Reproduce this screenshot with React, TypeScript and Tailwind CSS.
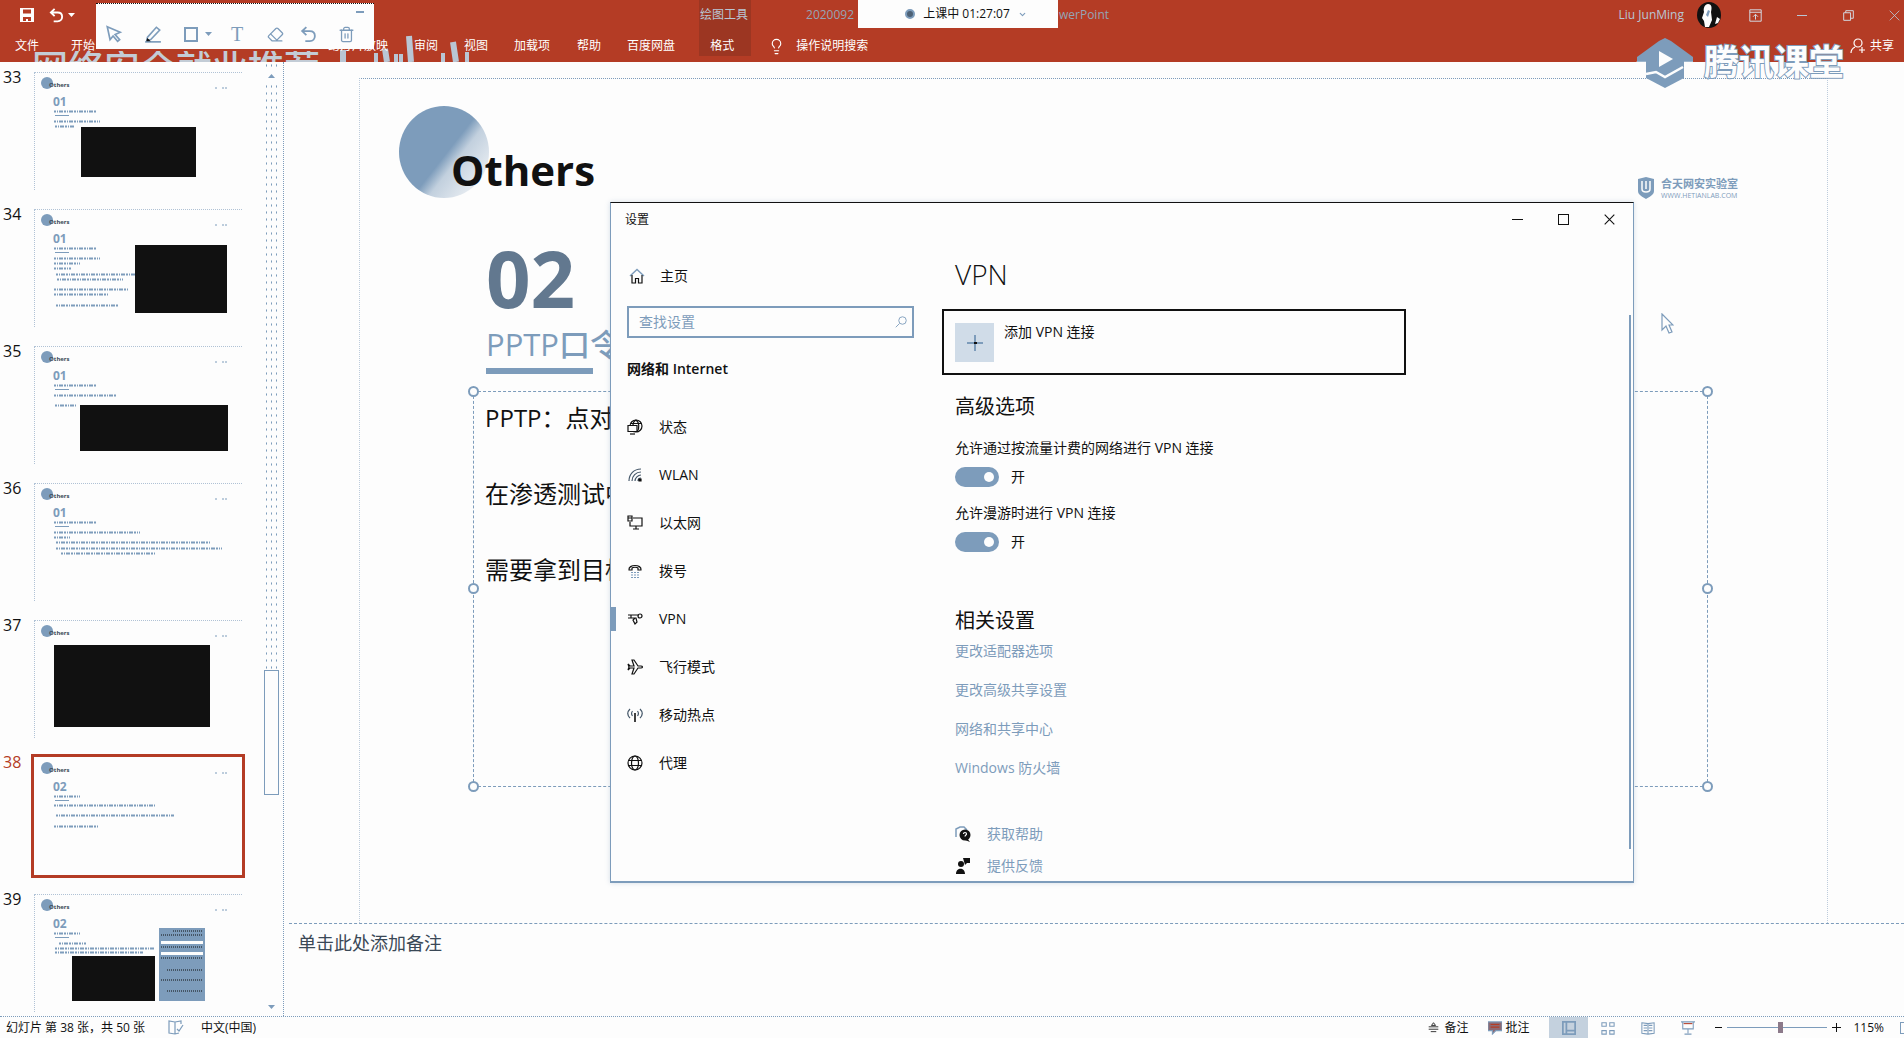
import React from "react";
import { ChevronDown, Lightbulb, Eraser, Trash2 } from "lucide-react";

const BLUE = "#7d9cbb";
const INK = "#111111";

type IconProps = { children: React.ReactNode; size?: number; color?: string; box?: string };

function Icon({ children, size = 16, color = "currentColor", box = "0 0 16 16" }: IconProps) {
  return (
    <svg
      width={size}
      height={size}
      viewBox={box}
      fill="none"
      stroke={color}
      strokeWidth={1.2}
      aria-hidden="true"
      className="shrink-0"
    >
      {children}
    </svg>
  );
}

function UndoGlyph({ size = 16, weight = 2 }: { size?: number; weight?: number }) {
  return (
    <Icon size={size}>
      <path d="M6 1L2 4.8l4 3.8M2 4.8h7.2c3 0 4.8 2 4.8 4.6s-1.8 4.8-4.8 4.8H5" strokeWidth={weight} />
    </Icon>
  );
}

function Caret() {
  return (
    <svg width="7" height="4" viewBox="0 0 7 4" fill="currentColor" aria-hidden="true" className="shrink-0">
      <path d="M0 0h7L3.500 4z" />
    </svg>
  );
}

function FloatingTools() {
  const button = "flex h-5 w-5 shrink-0 items-center justify-center";
  return (
    <div className="absolute top-[3px] left-24 z-20 flex h-[46px] w-[278px] items-end border-t border-dotted border-[#111] bg-[#fdfdfd] pb-[5px] pl-2 text-[#7d9cbb]">
      <button aria-label="最小化工具栏" className="absolute top-[7px] right-[10px] h-[2px] w-2 bg-[#7d9cbb]" />
      <button aria-label="选择" className={button}>
        <Icon size={18}>
          <path d="M2 1.500l11.500 5-4.500 2 4 4.500-1.800 1.500-4-4.700L4.500 13z" strokeWidth={1.500} />
        </Icon>
      </button>
      <button aria-label="画笔" className={`${button} ml-[19px]`}>
        <Icon size={18}>
          <path d="M3 11L11 2l3 2.500L6 13l-3.500.500z" strokeWidth={1.400} />
          <path d="M1 15h14" strokeWidth={1.500} />
          <path d="M2 14.500l1-3 3 3z" fill={INK} stroke="none" />
        </Icon>
      </button>
      <button aria-label="形状" className={`${button} ml-[18px]`}>
        <span className="h-[15px] w-[14px] border-2 border-[#7d9cbb]" />
      </button>
      <span className="mb-2 ml-[4px]"><Caret /></span>
      <button aria-label="文字" className={`${button} ml-[15px] font-["Liberation_Serif",serif] text-xl leading-5`}>
        T
      </button>
      <button aria-label="橡皮擦" className={`${button} ml-[18px]`}>
        <Eraser size={17} strokeWidth={1.800} />
      </button>
      <button aria-label="撤销" className={`${button} ml-[13px]`}>
        <UndoGlyph size={17} weight={1.700} />
      </button>
      <button aria-label="删除" className={`${button} ml-[18px]`}>
        <Trash2 size={17} strokeWidth={1.800} />
      </button>
    </div>
  );
}

function Header() {
  const tab = "shrink-0 whitespace-nowrap";
  return (
    <header className="relative h-[62px] shrink-0 text-xs text-white">
      <div className="h-full overflow-hidden bg-[#b43c25]">
        <div className="absolute top-0 left-[699px] h-14 w-[52px] bg-[#111]/15" />
        <div className="relative flex h-7 items-center pt-[2px]">
          <button aria-label="保存" className="ml-5">
            <svg width="14" height="14" viewBox="0 0 14 14" aria-hidden="true">
              <path d="M0 0h14v14H0z" fill="#fdfdfd" />
              <path d="M3 1.500h8v4H3zM3 9h8v4H8v-2H6v2H3z" fill="#b43c25" />
            </svg>
          </button>
          <button aria-label="撤销" className="ml-[15px]"><UndoGlyph size={15} weight={2} /></button>
          <span className="ml-[4px]"><Caret /></span>
          <span className="ml-[625px] shrink-0 text-[#b9c6d4]">绘图工具</span>
          <span className="ml-[58px] w-[303px] shrink-0 text-right whitespace-nowrap text-[#94a4b5]">
            <span className="float-left">2020092</span>werPoint
          </span>
          <span className="flex-1" />
          <span className="text-[#b9c6d4]">Liu JunMing</span>
          <svg className="ml-[13px]" width="24" height="26" viewBox="0 0 24 26" aria-hidden="true">
            <ellipse cx="12" cy="13" rx="12" ry="13" fill="#111" />
            <path d="M11 2c4 0 4 4 3 8l1 8-3 7H8l-1-6-2-3 2-6c-1-4 1-8 4-8zM20 15l3 2-2 4-3 1z" fill="#fdfdfd" />
            <path d="M11 8l2 1-2 6-2-2z" fill={BLUE} />
          </svg>
          <button aria-label="功能区显示选项" className="ml-[28px]">
            <Icon size={13} color="#d5dde6"><path d="M1 1h14v14H1zM1 4h14M8 13V7M5 9.500L8 6.500l3 3" /></Icon>
          </button>
          <button aria-label="最小化" className="ml-[35px] h-px w-[10px] bg-[#b9c6d4]" />
          <button aria-label="还原" className="ml-[36px]">
            <Icon size={11} color="#d5dde6"><path d="M1 4h10v11H1zM4 4V1h11v11h-4" strokeWidth={1.400} /></Icon>
          </button>
          <button aria-label="关闭" className="mr-1 ml-[35px]">
            <Icon size={11} color="#b9c6d4"><path d="M1 1l14 14M15 1L1 15" /></Icon>
          </button>
        </div>
        <nav className="relative z-10 flex h-9 items-center gap-[26px] pl-[15px]">
          <button className={`${tab} mr-[6px]`}>文件</button>
          <button className={tab}>开始</button>
          <button className={`${tab} ml-[207px]`}>幻灯片放映</button>
          <button className={tab}>审阅</button>
          <button className={tab}>视图</button>
          <button className={`${tab} mr-[1px]`}>加载项</button>
          <button className={tab}>帮助</button>
          <button className={tab}>百度网盘</button>
          <button className={`${tab} ml-[9px]`}>格式</button>
          <button className={`${tab} ml-[8px] flex items-center gap-[11px]`}>
            <Lightbulb size={17} strokeWidth={1.600} />
            操作说明搜索
          </button>
          <span className="flex-1" />
          <button className={`${tab} mr-[10px] flex items-center gap-[4px]`}>
            <Icon size={16}>
              <circle cx="8" cy="5" r="4" />
              <path d="M1 15c0-4 2-5 4-6M12 9v6M9 12h6" />
            </Icon>
            共享
          </button>
        </nav>
        <div className="pointer-events-none absolute right-0 bottom-0 left-[32px] flex h-[11px] items-start overflow-hidden text-4xl leading-[33px] font-medium text-[#c3ccd6]">
          <span className="shrink-0 whitespace-nowrap">网络安全就业推荐</span>
        </div>
        <svg className="pointer-events-none absolute top-8 left-[330px]" width="150" height="30" viewBox="0 0 150 30" aria-hidden="true">
          <g stroke="#b9c6d4">
            <path d="M13 18v12" strokeWidth="6" />
            <path d="M55 17l2 13M79 4l2 26M123 10l3 20" strokeWidth="6" />
            <path d="M46 21v9M66 22v8M71 22v8M113 21v9M137 20v10" strokeWidth="4" />
          </g>
        </svg>
      </div>
      <FloatingTools />
      <div className="absolute top-0 left-[858px] z-20 flex h-7 w-[200px] items-center justify-center gap-2 bg-[#fdfdfd] pl-4 text-xs text-[#111]">
        <span className="h-[10px] w-[10px] rounded-full border-2 border-[#7d9cbb] bg-[#4d6175]" />
        <span className="whitespace-nowrap">上课中 01:27:07</span>
        <ChevronDown size={9} strokeWidth={3} color={BLUE} />
      </div>
      <div className="pointer-events-none absolute top-[38px] right-[60px] z-10 flex items-start gap-[9px]">
        <svg width="60" height="50" viewBox="0 0 60 50" aria-hidden="true">
          <path d="M30 0l6 3 22 16v6H2v-6L24 3z" fill={BLUE} />
          <path d="M11 23h38v17L30 50 11 40z" fill={BLUE} />
          <path d="M24 13l14 8-14 8z" fill="#fdfdfd" />
          <path d="M11 36l10-2 9 5 18-10M1 25h10M49 25h9" stroke="#fdfdfd" strokeWidth="2.500" fill="none" />
        </svg>
        <span className="mt-[4px] text-[35px] leading-10 font-bold whitespace-nowrap text-[#fdfdfd] [-webkit-text-stroke:2px_#7d9cbb] [paint-order:stroke_fill]">
          腾讯课堂
        </span>
      </div>
    </header>
  );
}

type Stroke = [x: number, y: number, length: number];
type Block = { x: number; y: number; w: number; h: number };
type Thumb = { no: number; label?: string; strokes: Stroke[]; block?: Block; table?: boolean };

const THUMBS: Thumb[] = [
  { no: 33, label: "01", strokes: [[19, 38, 42], [19, 48, 46], [20, 53, 19]], block: { x: 46, y: 54, w: 115, h: 50 } },
  {
    no: 34,
    label: "01",
    strokes: [[19, 38, 42], [19, 48, 46], [19, 53, 26], [19, 58, 17], [21, 64, 80], [22, 69, 66], [19, 79, 74], [19, 84, 54], [21, 95, 62]],
    block: { x: 100, y: 35, w: 92, h: 68 },
  },
  { no: 35, label: "01", strokes: [[19, 38, 42], [19, 48, 62], [20, 58, 21]], block: { x: 45, y: 58, w: 148, h: 46 } },
  { no: 36, label: "01", strokes: [[19, 38, 42], [19, 48, 86], [19, 53, 16], [21, 58, 154], [21, 64, 166], [26, 69, 94]] },
  { no: 37, strokes: [], block: { x: 19, y: 24, w: 156, h: 82 } },
  { no: 38, label: "02", strokes: [[19, 38, 26], [19, 47, 101], [21, 57, 118], [19, 68, 44]] },
  { no: 39, label: "02", strokes: [[19, 38, 26], [24, 48, 27], [20, 53, 99], [20, 57, 88]], block: { x: 37, y: 61, w: 83, h: 45 }, table: true },
];

function Thumbnail({ item }: { item: Thumb }) {
  const active = item.no === 38;
  return (
    <li className="flex h-[137px] shrink-0 items-start pl-[3px]">
      <span className={`w-[31px] shrink-0 text-base leading-4 ${active ? "text-[#b43c25]" : "text-[#111]"}`}>{item.no}</span>
      <button
        aria-label={`幻灯片 ${item.no}`}
        className={`relative mt-[3px] h-[118px] w-[208px] border-t border-l border-dotted text-left ${
          active ? "border-transparent outline-[3px] outline-[#b43c25]" : "border-[#7d9cbb]/60"
        }`}
      >
        <svg className="absolute inset-0" width="207" height="117" viewBox="0 0 207 117" aria-hidden="true">
          <circle cx="12" cy="10" r="6" fill={BLUE} />
          {item.label && <path d="M20 42.500h14" stroke={BLUE} />}
          {item.strokes.map(([x, y, length]) => (
            <path key={`${x}-${y}`} d={`M${x} ${y}.500h${length}`} stroke={BLUE} strokeWidth="2" strokeDasharray="2 1 1 1 4 1" />
          ))}
          <path d="M180 15h2M187 15h5" stroke={BLUE} strokeDasharray="2 1" />
          {item.block && <rect x={item.block.x} y={item.block.y} width={item.block.w} height={item.block.h} fill={INK} />}
          {item.table && (
            <g>
              <rect x="124" y="33" width="46" height="73" fill={BLUE} />
              <path d="M126 47.500h42M126 58.500h42" stroke="#fdfdfd" strokeWidth="3" />
              <path d="M138 36h30M126 40h42M126 52h42M126 63h42M132 75h36M126 85h42M132 96h36" stroke={INK} strokeDasharray="1 1" />
            </g>
          )}
        </svg>
        <span className="absolute top-[9px] left-[14px] text-[6px] leading-[7px] font-bold text-[#3a4856]">Others</span>
        {item.label && (
          <span className="absolute top-[23px] left-[18px] text-xs leading-3 font-bold text-[#7d9cbb]">{item.label}</span>
        )}
      </button>
    </li>
  );
}

function SlidePanel() {
  return (
    <aside className="flex w-[284px] shrink-0 border-r border-dotted border-[#7d9cbb]">
      <ol className="flex h-full flex-1 flex-col overflow-hidden pt-[7px]">
        {THUMBS.map((item) => (
          <Thumbnail key={item.no} item={item} />
        ))}
      </ol>
      <div className="mr-1 flex w-[15px] shrink-0 flex-col items-center bg-[radial-gradient(#7d9cbb_0.5px,transparent_1px)] bg-[size:5px_7px] pt-2 text-[#7d9cbb]">
        <span className="flex h-3 w-full rotate-180 items-center justify-center bg-[#fdfdfd]"><Caret /></span>
        <div className="mt-[588px] h-[125px] w-full border border-[#7d9cbb] bg-[#fdfdfd]" />
        <div className="w-full flex-1 bg-[#fdfdfd]" />
        <span className="flex h-[18px] w-full items-center justify-center bg-[#fdfdfd]"><Caret /></span>
      </div>
    </aside>
  );
}

function Handle({ place }: { place: string }) {
  return <span className={`absolute h-[11px] w-[11px] rounded-full border-2 border-[#7d9cbb] bg-[#fdfdfd] ${place}`} />;
}

function Slide() {
  return (
    <section className="mt-4 mr-[76px] ml-[75px] flex-1 border-x border-t border-dotted border-x-[#7d9cbb]/50 border-t-[#7d9cbb] pr-[119px] pl-[39px]">
      <div className="flex h-[171px] items-start justify-between">
        <div className="grid pt-[27px]">
          <div className="col-start-1 row-start-1 h-[92px] w-[90px] rounded-[50%] bg-[linear-gradient(128deg,#7d9cbb_0%,#7d9cbb_52%,#c2d0de_62%,#fdfdfd_100%)]" />
          <h1 className="col-start-1 row-start-1 mt-[39px] ml-[52px] text-[42px] leading-[50px] font-bold">Others</h1>
        </div>
        <div className="mt-[98px] -mr-[30px] flex items-start gap-[7px] text-[#7d9cbb]">
          <svg width="16" height="22" viewBox="0 0 16 22" aria-hidden="true">
            <path d="M0 2l8-2 8 2v12c0 4-5 6-8 8-3-2-8-4-8-8z" fill={BLUE} />
            <path d="M4 4v8c0 4 8 4 8 0V4M8 4v8" stroke="#fdfdfd" strokeWidth="1.500" fill="none" />
          </svg>
          <div className="whitespace-nowrap">
            <p className="text-[11px] leading-[14px] font-bold">合天网安实验室</p>
            <p className="text-[7px] leading-[9px]">WWW.HETIANLAB.COM</p>
          </div>
        </div>
      </div>
      <div className="ml-[87px]">
        <p className="text-[78px] leading-[56px] font-bold text-[#62788f]">02</p>
        <p className="mt-[18px] text-[31px] leading-10 font-medium text-[#7d9cbb]">PPTP口令</p>
        <div className="mt-[4px] h-[6px] w-[107px] bg-[#7d9cbb]" />
      </div>
      <div className="relative mt-[17px] ml-[74px] h-[396px] border border-dashed border-[#7d9cbb] pt-[8px] pl-[11px] text-2xl">
        <Handle place="-top-[6px] -left-[6px]" />
        <Handle place="-top-[6px] -right-[6px]" />
        <Handle place="top-[191px] -left-[6px]" />
        <Handle place="top-[191px] -right-[6px]" />
        <Handle place="-bottom-[6px] -left-[6px]" />
        <Handle place="-bottom-[6px] -right-[6px]" />
        <p className="mb-10 leading-9">PPTP：点对</p>
        <p className="mb-10 leading-9">在渗透测试中</p>
        <p className="leading-9">需要拿到目标</p>
      </div>
    </section>
  );
}

const NAV: { label: string; icon: React.ReactNode }[] = [
  {
    label: "状态",
    icon: <><circle cx="9" cy="7" r="6" /><path d="M9 1c-2 1-3 3-3 5M9 1c3 2 4 8 1 12M4 4.500h10" /><path d="M1 6.500h9v6H1z" fill="#fdfdfd" /><path d="M3 15h5" /></>,
  },
  {
    label: "WLAN",
    icon: <><path d="M2 14C2 7 7 2 14 2M5 14c0-5 4-9 9-9M8 14c0-3 3-6 6-6M11 14c0-2 1-3 3-3" stroke="#46586a" /><path d="M12 12h2v2h-2z" fill={INK} /></>,
  },
  { label: "以太网", icon: <path d="M6 3h9v8H3V7M1 1h4v5H1zM1 3h4M9 11v3M6 14h6" /> },
  {
    label: "拨号",
    icon: <><path d="M2 7c-1-6 13-6 12 0l-3 0V5C10 4 6 4 5 5v2z" /><path d="M4 9.500h8M4 12h8M4 14.500h8" stroke={BLUE} strokeDasharray="2 1" /></>,
  },
  { label: "VPN", icon: <><path d="M1 4h11M1 7h7M4 4v3M8 7l-2 2 2 4 2-2-1-4z" /><circle cx="13" cy="5" r="2" /></> },
  { label: "飞行模式", icon: <path d="M1 5l2 2h4L5 1h2l4 6h3c2 0 2 2 0 2h-3l-4 6H5l2-6H3l-2 2 1-3z" /> },
  {
    label: "移动热点",
    icon: <><path d="M3 2C0 5 0 8 3 11M13 2c3 3 3 6 0 9M5.500 4c-1.500 2-1.500 3 0 5M10.500 4c1.500 2 1.500 3 0 5" stroke="#46586a" /><path d="M8 6v9" strokeWidth={1.600} /></>,
  },
  {
    label: "代理",
    icon: <><circle cx="8" cy="8" r="7" /><ellipse cx="8" cy="8" rx="3.500" ry="7" /><path d="M1.500 5.500h13M1.500 10.500h13" /></>,
  },
];

function Toggle({ id, label }: { id: string; label: string }) {
  return (
    <div className="mb-[7px]">
      <label htmlFor={id} className="block leading-7">{label}</label>
      <div className="flex h-[30px] items-center gap-3">
        <span className="relative h-5 w-11">
          <input id={id} type="checkbox" role="switch" defaultChecked className="peer h-5 w-11 appearance-none rounded-full bg-[#7d9cbb]" />
          <span className="pointer-events-none absolute top-[5px] right-[5px] h-[10px] w-[10px] rounded-full bg-[#fdfdfd]" />
        </span>
        <span>开</span>
      </div>
    </div>
  );
}

function SettingsWindow() {
  return (
    <div
      role="dialog"
      aria-label="设置"
      className="absolute top-[140px] right-[270px] left-[326px] z-10 flex h-[681px] flex-col border border-t border-b-2 border-[#7d9cbb] border-t-[#111] bg-[#fdfdfd] text-sm shadow-[0_0_5px_#7d9cbb55]"
    >
      <div className="flex h-[33px] shrink-0 items-center pr-[18px] pl-[14px] text-xs">
        <span className="flex-1">设置</span>
        <button aria-label="最小化" className="h-px w-[11px] bg-[#111]" />
        <button aria-label="最大化" className="ml-[35px] h-[11px] w-[11px] border border-[#111]" />
        <button aria-label="关闭" className="ml-[35px]">
          <Icon size={11}><path d="M1 1l14 14M15 1L1 15" strokeWidth={1.600} /></Icon>
        </button>
      </div>
      <div className="flex min-h-0 flex-1">
        <div className="w-[331px] shrink-0 pt-[22px] pr-[28px]">
          <a href="#home" className="flex h-9 items-center gap-[15px] pl-[18px]">
            <Icon>
              <path d="M1 8l7-6.500L15 8" stroke={BLUE} strokeWidth={1.500} />
              <path d="M3 7v8h3.500v-4.500h3V15H13V7" />
            </Icon>
            主页
          </a>
          <div className="mt-[12px] ml-4 flex h-8 items-center border-2 border-[#7d9cbb] pr-[5px] pl-[10px]">
            <input type="text" aria-label="查找设置" placeholder="查找设置" className="min-w-0 flex-1 outline-none placeholder:text-[#7d9cbb] placeholder:opacity-100" />
            <Icon size={12} color={BLUE}><circle cx="10" cy="6" r="5" /><path d="M6 10l-5 5" /></Icon>
          </div>
          <h2 className="mt-[21px] ml-4 leading-5 font-semibold">网络和 Internet</h2>
          <ul className="mt-6">
            {NAV.map(({ label, icon }) => (
              <li key={label}>
                <a href={`#${label}`} aria-current={label === "VPN" ? "page" : undefined} className="relative flex h-12 items-center gap-4 pl-4">
                  {label === "VPN" && <span className="absolute top-3 left-0 h-6 w-[5px] bg-[#7d9cbb]" />}
                  <Icon>{icon}</Icon>
                  {label}
                </a>
              </li>
            ))}
          </ul>
        </div>
        <div className="min-w-0 flex-1 overflow-hidden pt-5">
          <h1 className="pl-[13px] text-[28px] leading-9 font-light">VPN</h1>
          <button className="mt-[17px] flex h-[66px] w-[464px] items-start gap-[10px] border-2 border-[#111] pt-[12px] pl-[11px]">
            <span className="flex h-[39px] w-[39px] items-center justify-center bg-[#d0dce8]">
              <Icon><path d="M8 0v16M0 8h16" stroke={BLUE} strokeWidth={2} /><path d="M7 8h3" stroke={INK} strokeWidth={2} /></Icon>
            </span>
            <span className="leading-[18px]">添加 VPN 连接</span>
          </button>
          <div className="pl-[13px]">
            <h2 className="mt-[18px] mb-[13px] text-xl leading-7">高级选项</h2>
            <Toggle id="metered" label="允许通过按流量计费的网络进行 VPN 连接" />
            <Toggle id="roaming" label="允许漫游时进行 VPN 连接" />
            <h2 className="mt-[50px] text-xl leading-7">相关设置</h2>
            <ul className="text-[#7d9cbb]">
              {["更改适配器选项", "更改高级共享设置", "网络和共享中心", "Windows 防火墙"].map((text) => (
                <li key={text} className="mb-[7px] h-8 leading-8"><a href="#related">{text}</a></li>
              ))}
            </ul>
            <ul className="mt-[34px] text-[#7d9cbb]">
              <li>
                <a href="#help" className="flex h-8 items-center gap-4">
                  <Icon>
                    <path d="M1 11V3l4-2h4l3 3" stroke={BLUE} strokeWidth={1.500} />
                    <circle cx="10" cy="9" r="5.500" fill={INK} stroke="none" />
                    <path d="M12 12l3 4-5-2z" fill={INK} stroke="none" />
                    <path d="M8.500 8c0-2 3-2 3 0 0 1-1.500 1-1.500 2.500" stroke="#fdfdfd" />
                  </Icon>
                  获取帮助
                </a>
              </li>
              <li>
                <a href="#feedback" className="flex h-8 items-center gap-4">
                  <Icon>
                    <path d="M8 0h7v5h-3l-2 2zM1 16c0-7 9-7 9 0z" fill={INK} stroke="none" />
                    <circle cx="6" cy="6" r="3" fill={INK} stroke="none" />
                  </Icon>
                  提供反馈
                </a>
              </li>
            </ul>
          </div>
        </div>
        <div className="mt-[79px] mr-[2px] mb-8 w-[2px] shrink-0 bg-[#7d9cbb]" />
      </div>
    </div>
  );
}

function StatusBar() {
  return (
    <footer className="flex h-[22px] shrink-0 items-center border-t border-dotted border-[#7d9cbb] pl-[6px] text-xs whitespace-nowrap">
      <span className="w-[144px] shrink-0">幻灯片 第 38 张，共 50 张</span>
      <button aria-label="拼写检查" className="ml-[18px]">
        <Icon color={BLUE}><path d="M7 2v12M7 2L1 1v12l6 1 4-1M7 2l6-1v3M9 9l2 2 4-6" /></Icon>
      </button>
      <span className="ml-[17px]">中文(中国)</span>
      <span className="flex-1" />
      <button className="flex items-center gap-[5px]">
        <Icon size={11}><path d="M1 7h14M1 10.500h14M4 14h8M8 1l3 4H5z" /></Icon>
        备注
      </button>
      <button className="ml-5 flex items-center gap-[3px]">
        <Icon size={14}><path d="M0 1h16v10H9l-4 4v-4H0z" fill="#8c6a74" stroke={BLUE} /><path d="M3 4h10M3 7h10" stroke="#b43c25" /></Icon>
        批注
      </button>
      <button aria-label="普通视图" className="ml-[20px] flex h-[21px] w-[39px] items-center justify-center bg-[#c4d1de]">
        <Icon size={14} color={BLUE}><path d="M1 1h14v14H1zM5 1v14M5 11h10" strokeWidth={2} /></Icon>
      </button>
      <button aria-label="幻灯片浏览" className="ml-[13px]">
        <Icon size={14} color={BLUE}><path d="M1 2h5v4H1zM10 2h5v4h-5zM1 11h5v4H1zM10 11h5v4h-5z" /></Icon>
      </button>
      <button aria-label="阅读视图" className="ml-[26px]">
        <Icon size={14} color={BLUE}><path d="M8 3v12M1 2l7 1 7-1v12l-7 1-7-1zM3 5h4M3 8h4M3 11h4M9 5h4M9 8h4M9 11h4" /></Icon>
      </button>
      <button aria-label="幻灯片放映" className="ml-[26px]">
        <Icon size={14} color={BLUE}><path d="M0 1h16M2 1v8h12V1M8 9v5M4 15h8" /><path d="M3 3h10" stroke="#b43c25" /></Icon>
      </button>
      <button aria-label="缩小" className="ml-[20px] h-px w-[7px] bg-[#111]" />
      <input
        type="range"
        aria-label="缩放"
        min={0}
        max={100}
        defaultValue={53}
        className="mx-[5px] h-4 w-[100px] appearance-none bg-[linear-gradient(#7d9cbb,#7d9cbb)] bg-[size:100%_1px] bg-center bg-no-repeat [&::-webkit-slider-thumb]:h-[11px] [&::-webkit-slider-thumb]:w-[5px] [&::-webkit-slider-thumb]:appearance-none [&::-webkit-slider-thumb]:bg-[#8c7a8a]"
      />
      <button aria-label="放大"><Icon size={9}><path d="M8 0v16M0 8h16" strokeWidth={1.800} /></Icon></button>
      <span className="ml-[12px]">115%</span>
      <span className="ml-[16px] h-3 w-1 border border-r-0 border-[#7d9cbb]" />
    </footer>
  );
}

export default function App() {
  return (
    <div className='flex h-screen flex-col overflow-hidden bg-[#fdfdfd] font-["Open_Sans","Noto_Sans_CJK_SC",sans-serif] text-[#111]'>
      <Header />
      <div className="flex min-h-0 flex-1">
        <SlidePanel />
        <main className="relative flex min-w-0 flex-1 flex-col">
          <Slide />
          <SettingsWindow />
          <svg className="absolute top-[251px] right-[230px]" width="13" height="21" viewBox="0 0 13 21" aria-hidden="true">
            <path d="M1 1l11 11H8l3 7-3 1-3-7-4 4z" fill="#fdfdfd" stroke={BLUE} strokeWidth="1.200" />
          </svg>
          <div className="ml-[5px] h-[93px] shrink-0 border-t border-dashed border-[#7d9cbb] pt-[7px] pl-[9px] text-lg leading-6 text-[#3a4856]">
            单击此处添加备注
          </div>
        </main>
      </div>
      <StatusBar />
    </div>
  );
}
